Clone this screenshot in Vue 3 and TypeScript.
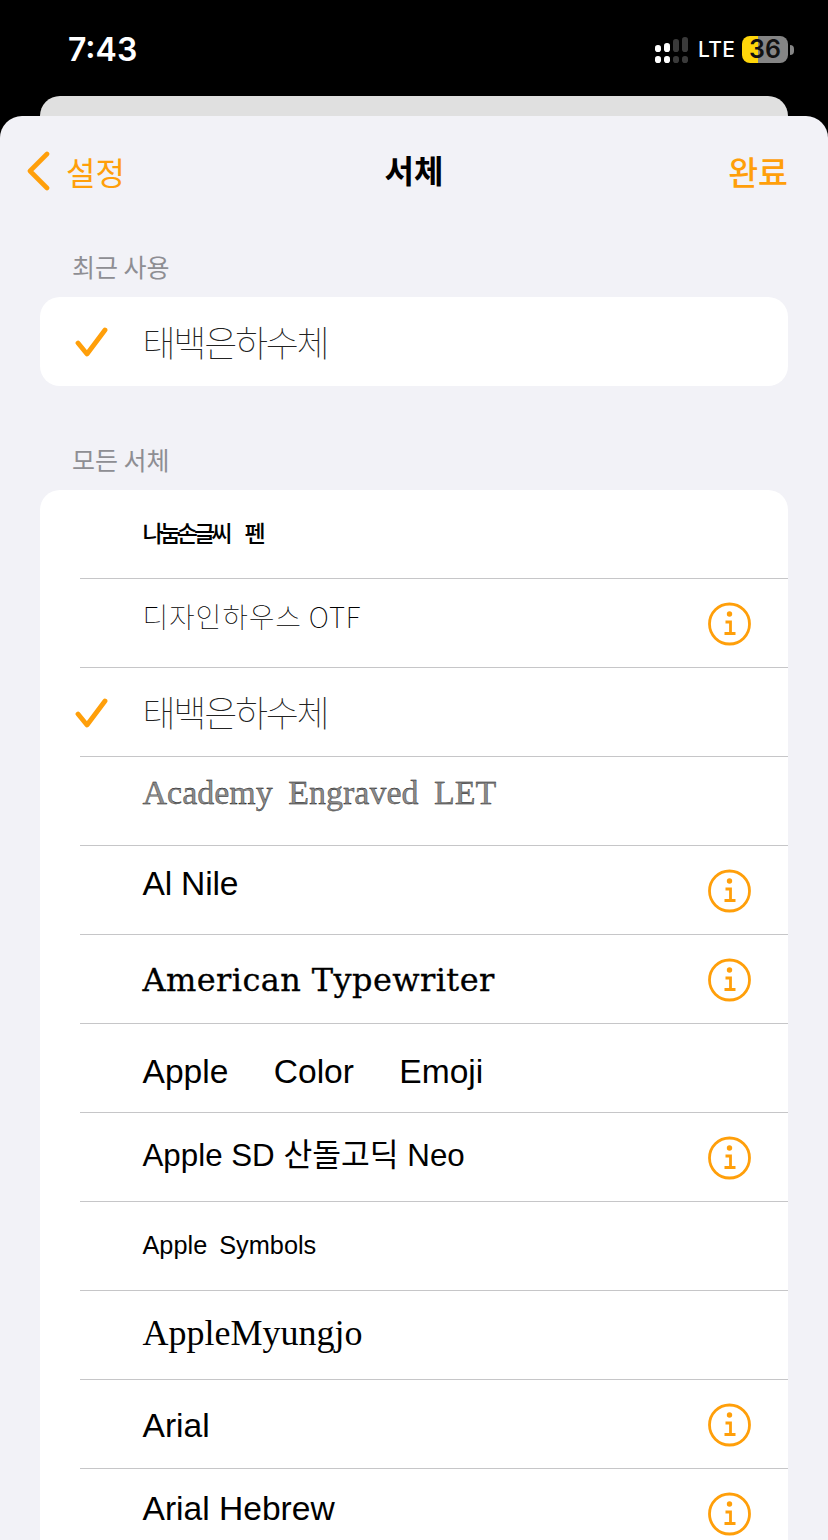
<script setup lang="ts">
interface FontRow {
  label: string
  cls: string
  checked?: boolean
  info?: boolean
}

const rows: FontRow[] = [
  { label: '나눔손글씨 펜', cls: 'f-pen' },
  { label: '디자인하우스 OTF', cls: 'f-house', info: true },
  { label: '태백은하수체', cls: 'f-taebaek', checked: true },
  { label: 'Academy Engraved LET', cls: 'f-academy' },
  { label: 'Al Nile', cls: 'f-nile', info: true },
  { label: 'American Typewriter', cls: 'f-typewriter', info: true },
  { label: 'Apple Color Emoji', cls: 'f-emoji' },
  { label: 'Apple SD 산돌고딕 Neo', cls: 'f-sd', info: true },
  { label: 'Apple Symbols', cls: 'f-symbols' },
  { label: 'AppleMyungjo', cls: 'f-myungjo' },
  { label: 'Arial', cls: 'f-arial', info: true },
  { label: 'Arial Hebrew', cls: 'f-hebrew', info: true }
]

const dots = [
  { x: 0, y: 8, h: 7, on: true },
  { x: 0, y: 19, h: 7, on: true },
  { x: 9, y: 6, h: 9, on: true },
  { x: 9, y: 19, h: 7, on: true },
  { x: 18, y: 2, h: 13, on: false },
  { x: 18, y: 19, h: 7, on: false },
  { x: 27, y: 0, h: 15, on: false },
  { x: 27, y: 19, h: 7, on: false }
]
</script>

<template>
  <div class="page">
    <header class="status">
      <span class="time">7:43</span>
      <div class="status-right">
        <svg class="signal" width="33" height="26" viewBox="0 0 33 26">
          <rect
            v-for="(d, i) in dots"
            :key="i"
            :x="d.x"
            :y="d.y"
            width="6"
            :height="d.h"
            rx="2.8"
            :fill="d.on ? '#fff' : '#3a3a3a'"
          />
        </svg>
        <span class="lte">LTE</span>
        <div class="battery">36</div>
        <span class="battery-cap"></span>
      </div>
    </header>

    <div class="back-card"></div>

    <main class="sheet">
      <nav class="nav">
        <div class="nav-back">
          <svg width="24" height="40" viewBox="0 0 24 40">
            <path d="M21 3 L4 20 L21 37" fill="none" stroke="#ff9f0a" stroke-width="4.6" stroke-linecap="round" stroke-linejoin="round" />
          </svg>
          <span>설정</span>
        </div>
        <h1 class="nav-title">서체</h1>
        <span class="nav-done">완료</span>
      </nav>

      <h2 class="section section-first">최근 사용</h2>
      <section class="group">
        <div class="row row-single">
          <svg class="check" width="34" height="32" viewBox="0 0 34 32">
            <path d="M3 16 L12 27 L30 3" fill="none" stroke="#ff9f0a" stroke-width="4.8" stroke-linecap="round" stroke-linejoin="round" />
          </svg>
          <span class="label f-taebaek">태백은하수체</span>
        </div>
      </section>

      <h2 class="section section-second">모든 서체</h2>
      <section class="group">
        <div v-for="row in rows" :key="row.label" class="row">
          <svg v-if="row.checked" class="check" width="34" height="32" viewBox="0 0 34 32">
            <path d="M3 16 L12 27 L30 3" fill="none" stroke="#ff9f0a" stroke-width="4.8" stroke-linecap="round" stroke-linejoin="round" />
          </svg>
          <span class="label" :class="row.cls">{{ row.label }}</span>
          <svg v-if="row.info" class="info" width="44" height="44" viewBox="0 0 44 44">
            <circle cx="22.5" cy="22" r="20" fill="none" stroke="#ff9f0a" stroke-width="2.8" />
            <circle cx="22.5" cy="12" r="2.7" fill="#ff9f0a" />
            <path d="M18.5 20 H23.5 V31.5 M17.5 31.5 H28.5" fill="none" stroke="#ff9f0a" stroke-width="2.8" />
          </svg>
        </div>
      </section>
    </main>
  </div>
</template>

<style>
html,
body {
  margin: 0;
  background: #000;
}
</style>

<style scoped>
.page {
  position: relative;
  width: 828px;
  height: 1540px;
  overflow: hidden;
  background: #000;
  font-family: "Liberation Sans", "Noto Sans CJK KR", sans-serif;
}

.status {
  height: 96px;
  box-sizing: border-box;
  padding: 0 34px 0 68px;
  display: flex;
  justify-content: space-between;
  align-items: flex-start;
  color: #fff;
}

.time {
  margin-top: 30px;
  font: 600 32px/40px "Inter", "Liberation Sans", sans-serif;
  letter-spacing: 0;
}

.status-right {
  margin-top: 36px;
  display: flex;
  align-items: center;
  height: 27px;
}

.signal {
  margin-top: 1px;
}

.lte {
  margin-top: 1px;
  margin-left: 10px;
  width: 35px;
  font: 500 21px/26px "Inter", "Liberation Sans", sans-serif;
  letter-spacing: 0.3px;
  white-space: nowrap;
}

.battery {
  margin-left: 9px;
  width: 46px;
  height: 27px;
  border-radius: 8px;
  background: linear-gradient(90deg, #ffd60a 16px, #858585 16px);
  text-align: center;
  color: #111;
  font: 600 25px/27px "Inter", "Liberation Sans", sans-serif;
}

.battery-cap {
  margin-left: 2px;
  width: 4px;
  height: 10px;
  border-radius: 0 5px 5px 0;
  background: #858585;
}

.back-card {
  position: absolute;
  left: 40px;
  top: 96px;
  width: 748px;
  height: 40px;
  border-radius: 20px 20px 0 0;
  background: #e0e0e0;
}

.sheet {
  position: absolute;
  left: 0;
  top: 116px;
  width: 828px;
  height: 1424px;
  box-sizing: border-box;
  padding: 0 40px;
  border-radius: 22px 22px 0 0;
  background: #f2f2f7;
}

.nav {
  position: relative;
  height: 110px;
  margin: 0 -40px;
  padding: 0 40px 0 26px;
  display: flex;
  justify-content: space-between;
  align-items: center;
  font-family: "Noto Sans CJK KR", sans-serif;
  font-size: 32px;
  color: #ff9f0a;
}

.nav-back {
  display: flex;
  align-items: center;
  gap: 16px;
}

.nav-title {
  position: absolute;
  left: 0;
  right: 0;
  top: 0;
  margin: 0;
  text-align: center;
  font-size: 32px;
  line-height: 106px;
  font-weight: 700;
  color: #000;
  pointer-events: none;
}

.nav-done {
  font-size: 32.5px;
  font-weight: 500;
  margin-bottom: 2px;
}

.section {
  margin: 0;
  padding-left: 32px;
  font: 400 25px/30px "Noto Sans CJK KR", sans-serif;
  color: #8e8e93;
}

.section-first {
  margin-top: 25px;
  height: 46px;
}

.section-second {
  margin-top: 58px;
  height: 46px;
}

.group {
  background: #fff;
  border-radius: 20px;
  overflow: hidden;
}

.row {
  position: relative;
  height: 88px;
  border-bottom: 1px solid #c6c6c8;
  margin-left: 40px;
  padding-left: 62.5px;
  display: flex;
  align-items: center;
  color: #000;
}

.row-single {
  height: 89px;
  border-bottom: 0;
}

.check {
  position: absolute;
  left: -5px;
  top: 30px;
}

.info {
  position: absolute;
  right: 37px;
  top: 23px;
}

.label {
  white-space: pre;
  line-height: 44px;
}

.f-pen {
  font: 500 23px/44px "Noto Sans CJK KR", sans-serif;
  letter-spacing: -4px;
  word-spacing: 15px;
  margin-bottom: 4px;
}

.f-house {
  font: 100 28px/44px "Noto Sans CJK KR", sans-serif;
  letter-spacing: 0.8px;
  margin-bottom: 14px;
}

.f-taebaek {
  font: 100 36px/44px "Noto Sans CJK KR", sans-serif;
  color: #222;
  letter-spacing: -2.3px;
  margin-bottom: 2px;
}

.f-academy {
  font: 400 34px/44px "Liberation Serif", serif;
  color: #8a8a8a;
  -webkit-text-stroke: 0.3px #000;
  word-spacing: 7px;
  margin-bottom: 16px;
}

.f-nile {
  font: 400 33.6px/44px "Liberation Sans", sans-serif;
  letter-spacing: -0.2px;
  margin-bottom: 12px;
}

.f-typewriter {
  font: 400 32px/44px "DejaVu Serif", serif;
  letter-spacing: 0.4px;
  -webkit-text-stroke: 0.3px #000;
  margin-top: 2px;
}

.f-emoji {
  font: 400 33.6px/44px "Liberation Sans", sans-serif;
  word-spacing: 36px;
  margin-top: 8px;
}

.f-sd {
  font: 400 31.3px/44px "Liberation Sans", "Noto Sans CJK KR", sans-serif;
  margin-bottom: 2px;
}

.f-symbols {
  font: 400 25.3px/44px "Liberation Sans", sans-serif;
  word-spacing: 5px;
  margin-bottom: 2px;
}

.f-myungjo {
  font: 400 36px/44px "Liberation Serif", serif;
  margin-bottom: 4px;
}

.f-arial {
  font: 400 33.6px/44px "Liberation Sans", sans-serif;
  margin-top: 4px;
}

.f-hebrew {
  font: 400 33.6px/44px "Liberation Sans", sans-serif;
  margin-bottom: 8px;
}
</style>
